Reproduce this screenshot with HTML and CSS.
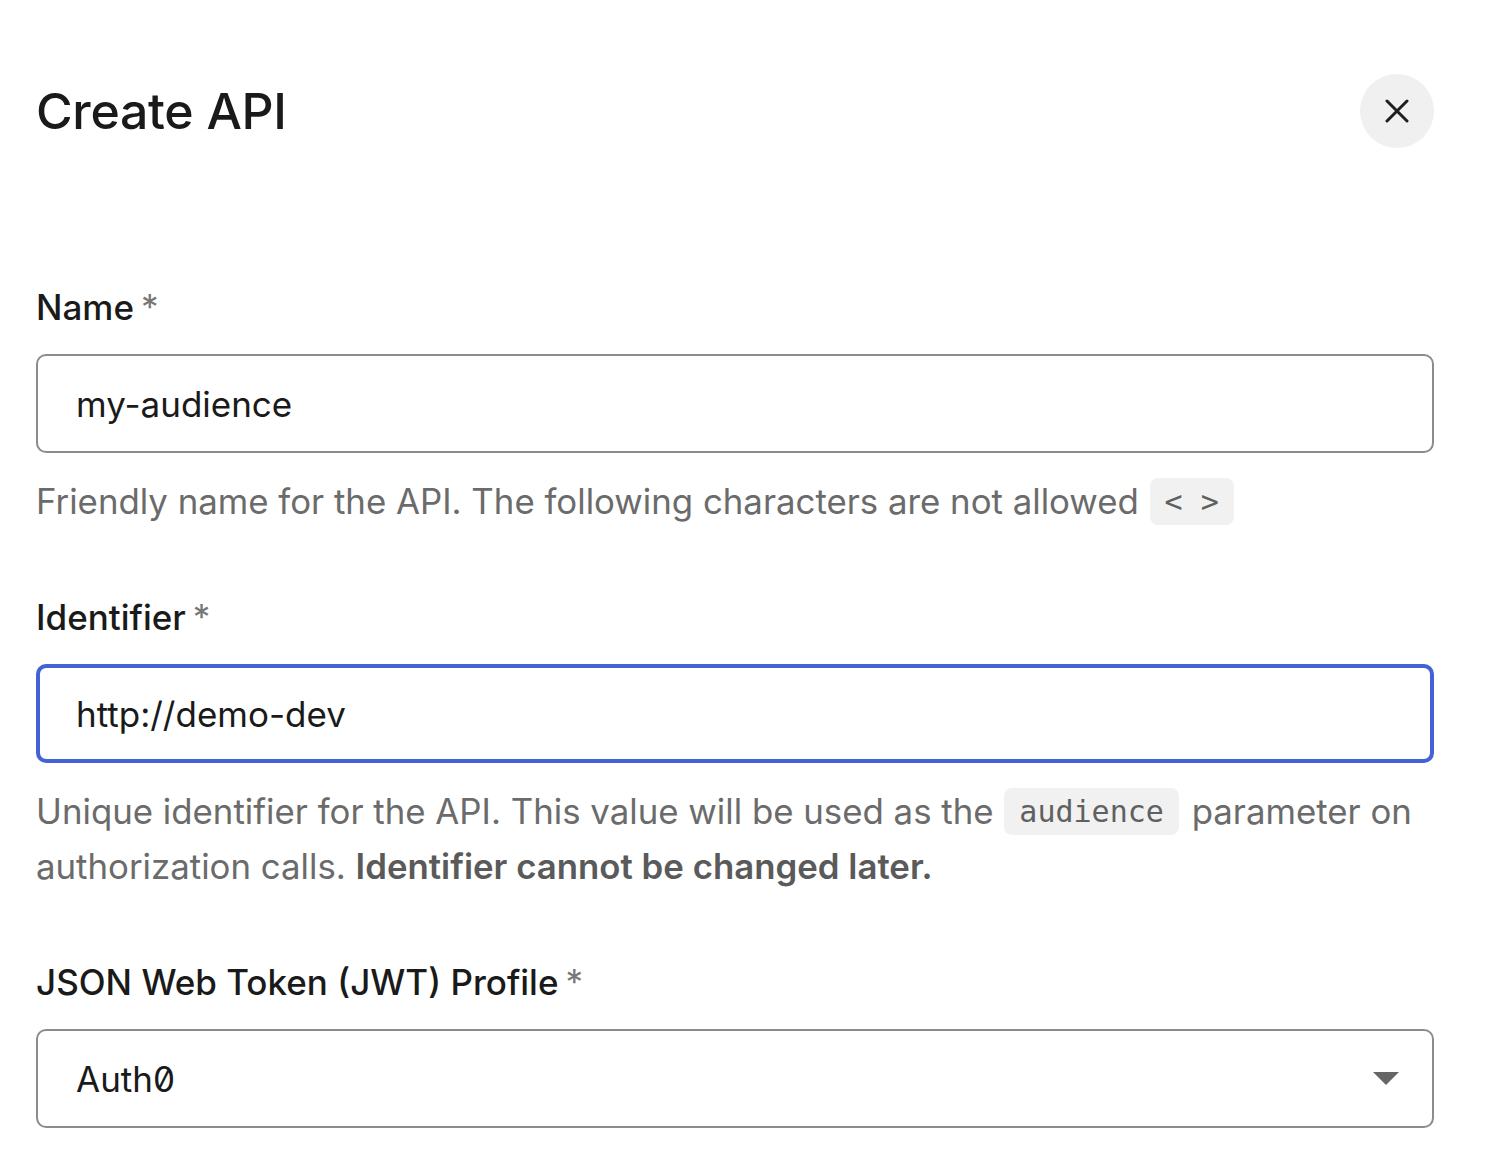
FILE: index.html
```html
<!DOCTYPE html>
<html lang="en">
<head>
<meta charset="utf-8">
<title>Create API</title>
<link rel="stylesheet" href="styles.css">
</head>
<body>
<div class="dialog">
  <header class="head">
    <h1 class="title">Create API</h1>
    <button class="close" aria-label="Close">
      <svg width="24" height="24" viewBox="0 0 24 24"><path d="M2 2 L22 22 M22 2 L2 22" stroke="#1f1f1f" stroke-width="3" stroke-linecap="round" fill="none"/></svg>
    </button>
  </header>

  <div class="field first">
    <label class="label">Name<span class="req">*</span></label>
    <div class="input"><span class="value">my-audience</span></div>
    <p class="help">Friendly name for the API. The following characters are not allowed <code class="chip">&lt; &gt;</code></p>
  </div>

  <div class="field">
    <label class="label">Identifier<span class="req">*</span></label>
    <div class="input focus"><span class="value">http://demo-dev</span></div>
    <p class="help">Unique identifier for the API. This value will be used as the <code class="chip">audience</code> parameter on authorization calls. <strong>Identifier cannot be changed later.</strong></p>
  </div>

  <div class="field">
    <label class="label">JSON Web Token (JWT) Profile<span class="req">*</span></label>
    <div class="input select"><span class="value zero">Auth0</span>
      <svg class="caret" width="26" height="13" viewBox="0 0 26 13"><path d="M0 0 H26 L13 13 Z" fill="#666"/></svg>
    </div>
  </div>
</div>
</body>
</html>
```

FILE: styles.css
```css
html, body {
  margin: 0;
  padding: 0;
  background: #fff;
}
body {
  font-family: Inter, "Noto Sans", sans-serif;
  color: #1f1f1f;
}
.dialog {
  width: 1398px;
  margin-left: 36px;
  padding-top: 74px;
  display: flex;
  flex-direction: column;
}
.head {
  display: flex;
  align-items: center;
  justify-content: space-between;
  height: 74px;
}
.title {
  margin: 0;
  font-size: 50px;
  font-weight: 500;
  letter-spacing: -0.3px;
  color: #1a1a1a;
}
.close {
  width: 74px;
  height: 74px;
  border-radius: 50%;
  border: none;
  background: #f0f0f0;
  display: flex;
  align-items: center;
  justify-content: center;
  padding: 0;
}
.field {
  display: flex;
  flex-direction: column;
  margin-top: 68px;
}
.field.first {
  margin-top: 139px;
}
.label {
  font-size: 35px;
  font-weight: 500;
  line-height: 40px;
  color: #1a1a1a;
}
.req {
  color: #777;
  margin-left: 7px;
  font-weight: 400;
}
.input {
  margin-top: 27px;
  height: 99px;
  box-sizing: border-box;
  border: 2px solid #8c8c8c;
  border-radius: 10px;
  display: flex;
  align-items: center;
  padding-left: 38px;
  padding-right: 33px;
}
.input.focus {
  border: 4px solid #4362d6;
  padding-left: 36px;
  padding-right: 31px;
}
.value {
  font-size: 35px;
  color: #1a1a1a;
}
.zero {
  font-variant-numeric: slashed-zero;
}
.select {
  justify-content: space-between;
}
.help {
  margin: 21px 0 0;
  font-size: 34.8px;
  line-height: 55px;
  color: #6b6b6b;
}
.help strong {
  font-weight: 600;
  color: #5a5a5a;
}
.chip {
  display: inline-block;
  font-family: "DejaVu Sans Mono", monospace;
  font-size: 30px;
  line-height: 47px;
  height: 47px;
  vertical-align: middle;
  background: #f1f1f1;
  color: #606060;
  border-radius: 8px;
  padding: 0 15px;
  margin-left: 1px;
  margin-right: 3px;
  position: relative;
  top: -3px;
}
```
